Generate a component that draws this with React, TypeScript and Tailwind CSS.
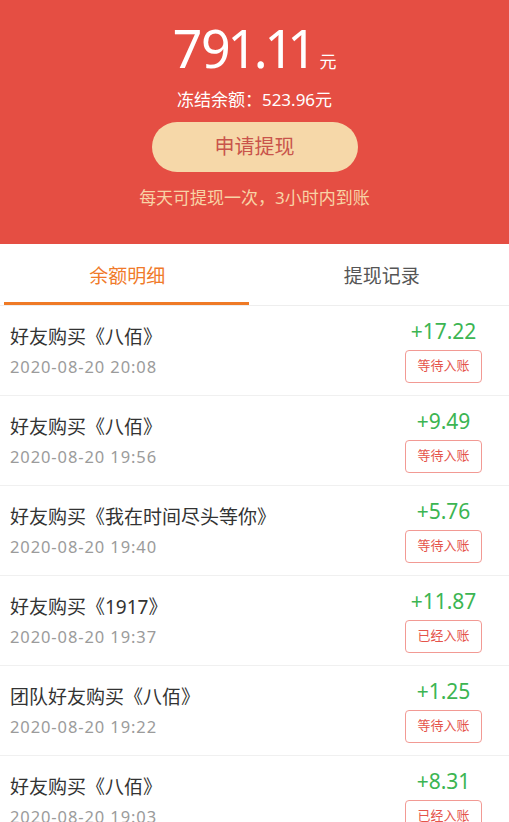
import React from "react";

const rows = [
  { title: "好友购买《八佰》", date: "2020-08-20 20:08", amount: "+17.22", status: "等待入账" },
  { title: "好友购买《八佰》", date: "2020-08-20 19:56", amount: "+9.49", status: "等待入账" },
  { title: "好友购买《我在时间尽头等你》", date: "2020-08-20 19:40", amount: "+5.76", status: "等待入账" },
  { title: "好友购买《1917》", date: "2020-08-20 19:37", amount: "+11.87", status: "已经入账" },
  { title: "团队好友购买《八佰》", date: "2020-08-20 19:22", amount: "+1.25", status: "等待入账" },
  { title: "好友购买《八佰》", date: "2020-08-20 19:03", amount: "+8.31", status: "已经入账" },
];

export default function App() {
  return (
    <div
      className="w-[509px] h-[822px] overflow-hidden bg-white"
      style={{ fontFamily: '"Noto Sans", "Noto Sans CJK SC", sans-serif' }}
    >
      <div className="h-[244px] bg-[#e54e43] flex flex-col items-center pt-[22px]">
        <div className="flex items-baseline text-white ml-[2px]">
          <span className="text-[52px] leading-[52px] proportional-nums">791.11</span>
          <span className="text-[17px] ml-[6px]">元</span>
        </div>
        <div className="mt-[14px] text-white text-[17px] leading-[22px]">冻结余额：523.96元</div>
        <div className="mt-[11px] w-[206px] h-[50px] rounded-full bg-[#f6d8a9] flex items-center justify-center text-[20px] text-[#c9544b]">
          申请提现
        </div>
        <div className="mt-[15px] text-[17px] leading-[22px] text-[#f8d3a6]">每天可提现一次，3小时内到账</div>
      </div>
      <div className="h-[62px] flex border-b border-[#eeeeee]">
        <div className="flex-1 flex flex-col items-center justify-end">
          <div className="text-[19px] leading-[24px] text-[#f07a2a] mb-[14px]">余额明细</div>
          <div className="w-[245px] h-[3px] bg-[#ef7a26] -ml-[1px]" />
        </div>
        <div className="flex-1 flex flex-col items-center justify-end">
          <div className="text-[19px] leading-[24px] text-[#555555] mb-[17px]">提现记录</div>
        </div>
      </div>
      <div>
        {rows.map((r, i) => (
          <div key={i} className="h-[90px] flex items-center justify-between pl-[10px] pr-[27px] border-b border-[#f0f0f0]">
            <div className="flex flex-col">
              <div className="text-[19px] leading-[26px] text-[#333333]">{r.title}</div>
              <div className="mt-[6px] text-[16.5px] leading-[22px] text-[#9b9b9b] tracking-[0.9px]">{r.date}</div>
            </div>
            <div className="flex flex-col items-center">
              <div className="text-[21px] leading-[24px] text-[#3cb552]">{r.amount}</div>
              <div className="mt-[7px] w-[77px] h-[33px] rounded-[4px] border border-[#f29a94] flex items-center justify-center text-[13px] text-[#e5544b]">
                {r.status}
              </div>
            </div>
          </div>
        ))}
      </div>
    </div>
  );
}
